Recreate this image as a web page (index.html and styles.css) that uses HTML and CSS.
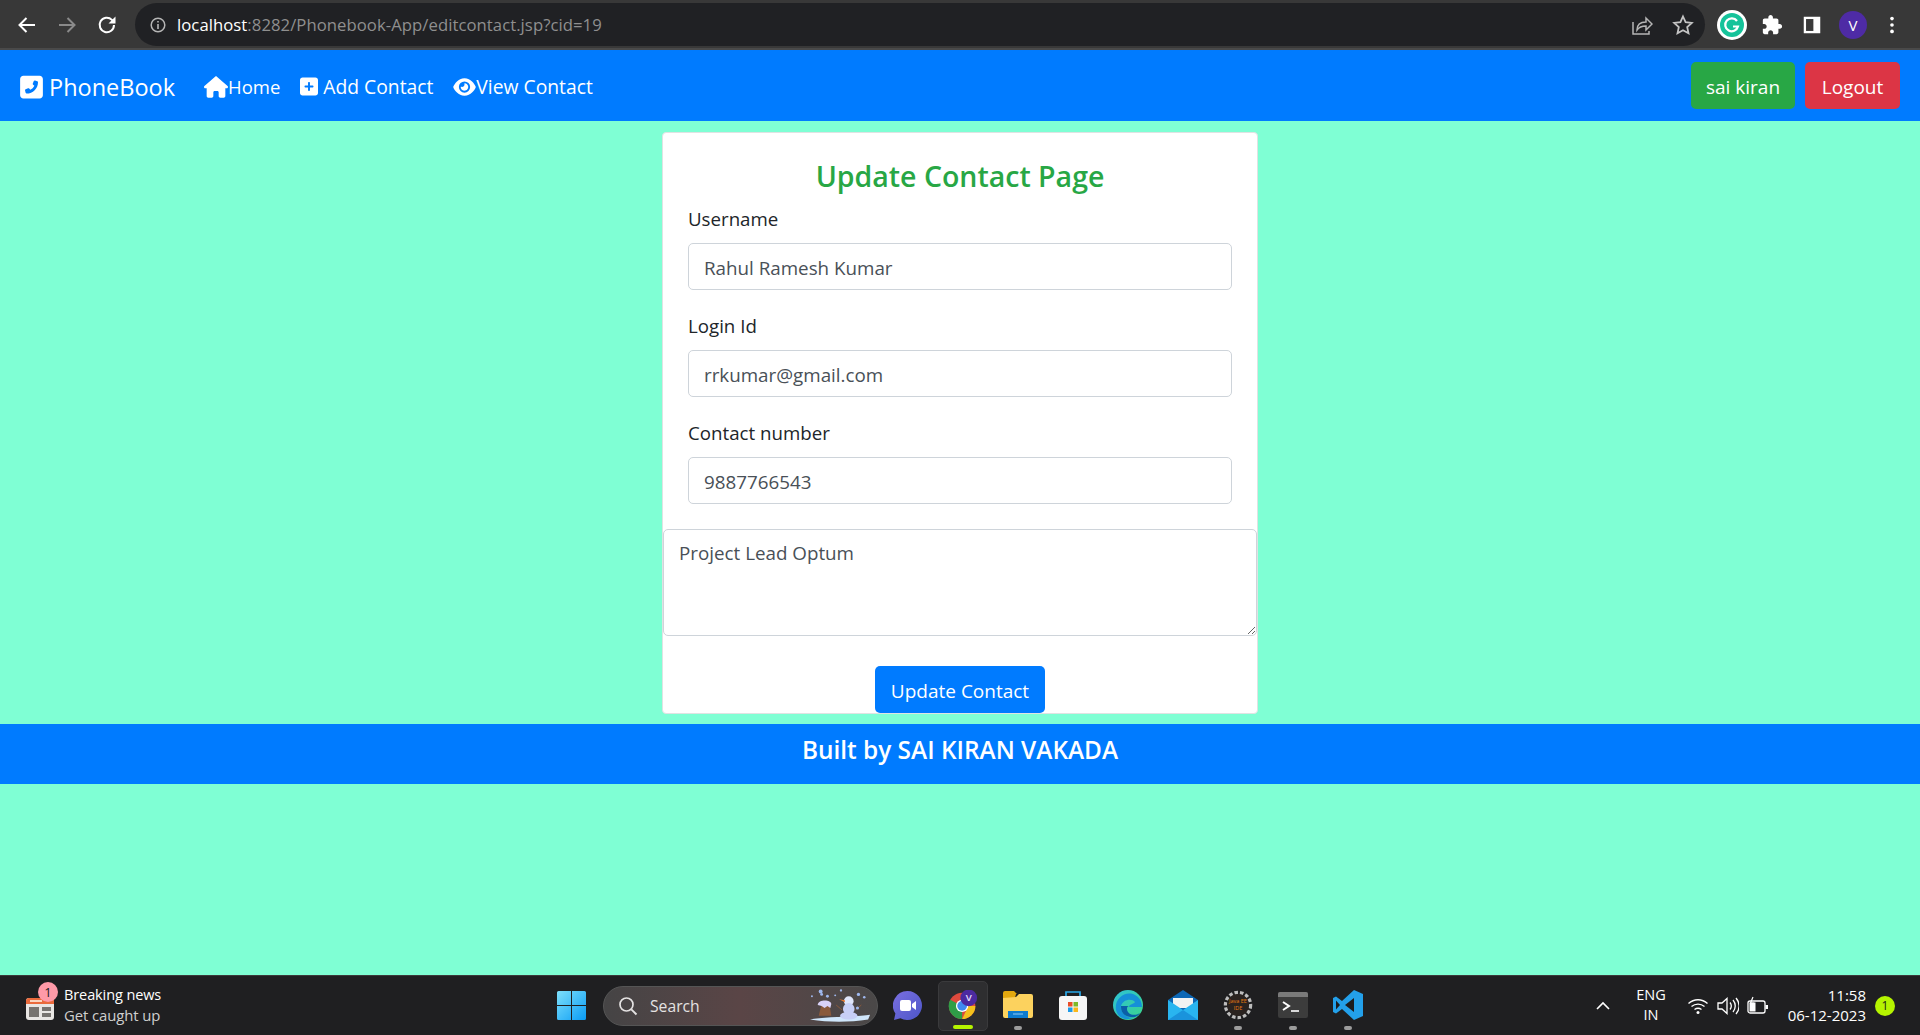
FILE: index.html
```html
<!DOCTYPE html>
<html lang="en">
<head>
<meta charset="utf-8">
<title>Update Contact</title>
<link rel="stylesheet" href="styles.css">
</head>
<body>
<div class="screen">
  <header class="toolbar">
    <div class="tb-nav">
      <svg class="tb-ico" viewBox="0 0 24 24"><path d="M20 12H5M11.5 5L4.5 12l7 7" fill="none" stroke="#fff" stroke-width="2"/></svg>
      <svg class="tb-ico" viewBox="0 0 24 24"><path d="M4 12h15M12.5 5l7 7-7 7" fill="none" stroke="#8a8a8a" stroke-width="2"/></svg>
      <svg class="tb-ico" viewBox="0 0 24 24"><path d="M19 12a7.2 7.2 0 1 1-2.1-5.1L19.5 9.500" fill="none" stroke="#fff" stroke-width="2"/><path d="M20.500 3.500v7h-7z" fill="#fff"/></svg>
    </div>
    <div class="omnibox">
      <svg class="omni-info" viewBox="0 0 18 18"><circle cx="9" cy="9" r="6.800" fill="none" stroke="#b5b5b5" stroke-width="1.500"/><path d="M9 8v5M9 5v1.600" stroke="#b5b5b5" stroke-width="1.600"/></svg>
      <span class="url"><span class="url-host">localhost</span>:8282/Phonebook-App/editcontact.jsp?cid=19</span>
      <svg class="omni-share" viewBox="0 0 22 22"><path d="M2 8v12h16v-3" fill="none" stroke="#b5b5b5" stroke-width="1.500"/><path d="M6 16c0-6 4-8 9-8V4l6 6-6 6v-4c-4 0-7 1-9 4z" fill="none" stroke="#b5b5b5" stroke-width="1.500"/></svg>
      <svg class="omni-star" viewBox="0 0 22 22"><path d="M11 2.500l2.600 5.700 6.200.7-4.600 4.200 1.300 6.100L11 16.200l-5.500 3 1.300-6.100-4.600-4.200 6.200-.7z" fill="none" stroke="#c4c4c4" stroke-width="1.800"/></svg>
    </div>
    <div class="tb-ext">
      <svg class="ext-g" viewBox="0 0 30 30"><circle cx="15" cy="15" r="15" fill="#fff"/><circle cx="15" cy="15" r="12" fill="#15c39a"/><path d="M20 11a6.500 6.500 0 1 0 1 5.500h-5" fill="none" stroke="#fff" stroke-width="2.200"/></svg>
      <svg class="ext-i" viewBox="0 0 24 24"><path fill="#fff" d="M20.500 11H19V7c0-1.100-.9-2-2-2h-4V3.500C13 2.120 11.880 1 10.500 1S8 2.120 8 3.500V5H4c-1.100 0-1.990.9-1.990 2v3.800H3.500c1.490 0 2.700 1.210 2.700 2.700s-1.210 2.700-2.700 2.700H2V20c0 1.100.9 2 2 2h3.800v-1.500c0-1.490 1.210-2.700 2.700-2.700 1.490 0 2.700 1.210 2.700 2.700V22H17c1.100 0 2-.9 2-2v-4h1.500c1.380 0 2.500-1.120 2.500-2.500S21.880 11 20.500 11z"/></svg>
      <svg class="ext-i ext-panel" viewBox="0 0 24 24"><path d="M3 3h18v18H3z" fill="#fff"/><path d="M5.500 5.500h8v13h-8z" fill="#3a3a3a"/></svg>
      <span class="avatar">V</span>
      <svg class="ext-i" viewBox="0 0 24 24"><circle cx="12" cy="5" r="2" fill="#fff"/><circle cx="12" cy="12" r="2" fill="#fff"/><circle cx="12" cy="19" r="2" fill="#fff"/></svg>
    </div>
  </header>

  <nav class="navbar">
    <a class="brand">
      <svg class="brand-ico" viewBox="0 0 448 512"><path fill="#fff" d="M384 32c35.300 0 64 28.700 64 64V416c0 35.300-28.700 64-64 64H64c-35.300 0-64-28.700-64-64V96C0 60.700 28.700 32 64 32H384zm-90.700 96.700c-9.700-2.600-19.900 2.300-23.700 11.600l-20 48c-3.400 8.200-1 17.600 5.800 23.200L280 231.700c-16.600 35.200-45.100 63.700-80.300 80.300l-20.200-24.700c-5.600-6.800-15-9.200-23.200-5.800l-48 20c-9.300 3.900-14.200 14-11.600 23.700l12 44C111.100 378 119 384 128 384c123.700 0 224-100.300 224-224c0-9-6-16.900-14.700-19.300l-44-12z"/></svg>
      <span>PhoneBook</span>
    </a>
    <a class="nav-link nav-home">
      <svg class="ico-home" viewBox="0 0 576 512"><path fill="#fff" d="M575.800 255.500c0 18-15 32.100-32 32.100h-32l.7 160.200c0 2.700-.2 5.400-.5 8.100V472c0 22.100-17.900 40-40 40H456c-1.100 0-2.200 0-3.300-.1c-1.400 .1-2.800 .1-4.200 .1H416 392c-22.100 0-40-17.900-40-40V448 384c0-17.700-14.300-32-32-32H256c-17.700 0-32 14.300-32 32v64 24c0 22.100-17.900 40-40 40H160 128.100c-1.500 0-3-.1-4.500-.2c-1.200 .1-2.400 .2-3.600 .2H104c-22.100 0-40-17.900-40-40V360c0-.9 0-1.900 .1-2.800V287.600H32c-18 0-32-14-32-32.100c0-9 3-17 10-24L266.400 8c7-7 15-8 22-8s15 2 21 7L564.800 231.500c8 7 12 15 11 24z"/></svg>
      <span>Home</span>
    </a>
    <a class="nav-link">
      <svg class="ico-plus" viewBox="0 0 448 512"><path fill="#fff" d="M64 32C28.700 32 0 60.700 0 96V416c0 35.300 28.700 64 64 64H384c35.300 0 64-28.700 64-64V96c0-35.300-28.700-64-64-64H64zM200 344V280H136c-13.300 0-24-10.700-24-24s10.700-24 24-24h64V168c0-13.300 10.700-24 24-24s24 10.700 24 24v64h64c13.300 0 24 10.700 24 24s-10.700 24-24 24H248v64c0 13.300-10.700 24-24 24s-24-10.700-24-24z"/></svg>
      <span>Add Contact</span>
    </a>
    <a class="nav-link">
      <svg class="ico-eye" viewBox="0 0 576 512"><path fill="#fff" d="M288 32c-80.800 0-145.500 36.800-192.600 80.600C48.600 156 17.300 208 2.500 243.700c-3.300 7.900-3.300 16.700 0 24.600C17.300 304 48.600 356 95.400 399.400C142.500 443.200 207.200 480 288 480s145.500-36.800 192.600-80.600c46.800-43.500 78.100-95.400 93-131.100c3.300-7.900 3.300-16.700 0-24.600c-14.900-35.700-46.200-87.700-93-131.100C433.500 68.800 368.800 32 288 32zM144 256a144 144 0 1 1 288 0 144 144 0 1 1 -288 0zm144-64c0 35.300-28.700 64-64 64c-7.100 0-13.900-1.200-20.300-3.300c-5.500-1.800-11.900 1.600-11.700 7.400c.3 6.900 1.300 13.800 3.200 20.700c13.700 51.200 66.400 81.600 117.600 67.900s81.600-66.400 67.900-117.600c-11.100-41.500-47.800-69.400-88.600-71.100c-5.800-.2-9.200 6.100-7.400 11.700c2.100 6.400 3.300 13.200 3.300 20.300z"/></svg>
      <span>View Contact</span>
    </a>
    <div class="nav-actions">
      <a class="btn btn-green">sai kiran</a>
      <a class="btn btn-red">Logout</a>
    </div>
  </nav>

  <main class="page">
    <div class="card">
      <h4 class="card-title">Update Contact Page</h4>
      <div class="field">
        <label class="field-label">Username</label>
        <input class="control" type="text" value="Rahul Ramesh Kumar">
      </div>
      <div class="field">
        <label class="field-label">Login Id</label>
        <input class="control" type="text" value="rrkumar@gmail.com">
      </div>
      <div class="field">
        <label class="field-label">Contact number</label>
        <input class="control" type="text" value="9887766543">
      </div>
      <textarea class="control area">Project Lead Optum</textarea>
      <div class="submit-row"><button class="btn btn-blue" type="button">Update Contact</button></div>
    </div>
  </main>

  <footer class="footer">Built by SAI KIRAN VAKADA</footer>
  <div class="spacer"></div>

  <div class="taskbar">
    <div class="tk-left">
      <div class="news-ico">
        <svg class="news-svg" viewBox="0 0 28 26"><rect x="0" y="2" width="28" height="22" rx="3" fill="#e9e6e3"/><path d="M0 5a3 3 0 0 1 3-3h22a3 3 0 0 1 3 3v3H0z" fill="#ea6a3c"/><rect x="3" y="11" width="10" height="10" fill="#77736f"/><rect x="16" y="11" width="9" height="4" fill="#77736f"/><rect x="16" y="17" width="9" height="4" fill="#77736f"/><rect x="4" y="4" width="12" height="2" fill="#fbd5c0"/></svg>
        <span class="news-badge">1</span>
      </div>
      <div class="news-text"><span class="news-1">Breaking news</span><span class="news-2">Get caught up</span></div>
    </div>

    <svg class="win" viewBox="0 0 29 29"><defs><linearGradient id="wg" x1="0" y1="0" x2="1" y2="1"><stop offset="0" stop-color="#7ee0fb"/><stop offset="1" stop-color="#0a9cf5"/></linearGradient></defs><path fill="url(#wg)" d="M0 1.500A1.500 1.500 0 0 1 1.500 0H14v14H0zM15 0h12.500A1.500 1.500 0 0 1 29 1.500V14H15zM0 15h14v14H1.500A1.500 1.500 0 0 1 0 27.500zM15 15h14v12.500a1.500 1.500 0 0 1-1.500 1.500H15z"/></svg>

    <div class="search">
      <svg class="search-ico" viewBox="0 0 20 20"><circle cx="8.500" cy="8.500" r="6.500" fill="none" stroke="#e4e2e2" stroke-width="1.700"/><path d="M13.300 13.300L18.500 18.500" stroke="#e4e2e2" stroke-width="1.900"/></svg>
      <span class="search-text">Search</span>
      <svg class="snow" viewBox="0 0 64 36"><path d="M0 32c14-3 50-3 62-5l-2 5c-20 3-40 3-60 0z" fill="#cfe6fb"/><path d="M9 28l3-12h8l2 12z" fill="#8a5a3c"/><path d="M8 17c0-6 14-6 14-1l-1 4-3-2-3 2-3-2z" fill="#d9d2f8"/><circle cx="40" cy="13" r="5" fill="#dfe6fb"/><circle cx="40" cy="21" r="6" fill="#c7cff6"/><ellipse cx="40" cy="28" rx="9" ry="4" fill="#c7cff6"/><path d="M36 12l-6-1 6 3z" fill="#e8772e"/><path d="M47 22l6-5M33 22l-6-5" stroke="#8a5a3c" stroke-width="1"/><circle cx="12" cy="6" r="1.500" fill="#9fb8ee"/><circle cx="2" cy="8" r="1" fill="#9fb8ee"/><circle cx="11" cy="3" r="2" fill="#9fb8ee"/><circle cx="18" cy="8" r="1.500" fill="#9fb8ee"/><circle cx="26" cy="7" r="1" fill="#9fb8ee"/><circle cx="32" cy="2" r="1.200" fill="#9fb8ee"/><circle cx="50" cy="6" r="1.700" fill="#9fb8ee"/><circle cx="56" cy="9" r="1.300" fill="#9fb8ee"/><circle cx="49" cy="20" r="1.600" fill="#9fb8ee"/></svg>
    </div>

    <svg class="app-teams" viewBox="0 0 29 29"><defs><linearGradient id="tg" x1="0" y1="0" x2="1" y2="1"><stop offset="0" stop-color="#7b6fe0"/><stop offset="1" stop-color="#4c56c8"/></linearGradient></defs><path fill="url(#tg)" d="M14.500 0a14.500 14.500 0 1 1-7 27.200L1 29l1.400-6.400A14.500 14.500 0 0 1 14.500 0z"/><rect x="7" y="9" width="11" height="11" rx="2" fill="#fff"/><path d="M19 13l4-3v9l-4-3z" fill="#fff"/></svg>

    <div class="tk-apps">
      <div class="app app-active">
        <svg class="app-svg" viewBox="0 0 34 34"><circle cx="16" cy="18" r="15" fill="#de4a3d"/><path d="M16 33A15 15 0 0 1 2.500 11L16 18z" fill="#2f9e47"/><path d="M31 18a15 15 0 0 1-15 15L23 18z" fill="#f5c11c"/><circle cx="16" cy="18" r="7" fill="#fff"/><circle cx="16" cy="18" r="5.500" fill="#3f8bf0"/><circle cx="23.500" cy="9" r="9.500" fill="#4c2aa0"/><text class="chrome-v" x="23.500" y="12.500">V</text></svg>
        <span class="run run-on"></span>
      </div>
      <div class="app">
        <svg class="app-svg" viewBox="0 0 30 30"><path d="M0 3a2 2 0 0 1 2-2h9l3 3h-1l-1 4H0z" fill="#e3a80f"/><path d="M0 8l13-1 3-3h12a2 2 0 0 1 2 2v20a2 2 0 0 1-2 2H2a2 2 0 0 1-2-2z" fill="#fcd25e"/><path d="M5 21h20v7H5z" fill="#0d7bd0"/><path d="M10 24h10" stroke="#8fcbf5" stroke-width="1"/></svg>
        <span class="run"></span>
      </div>
      <div class="app">
        <svg class="app-svg" viewBox="0 0 30 30"><path d="M8 6V2h14v4" fill="none" stroke="#29a8e8" stroke-width="1.700"/><rect x="1" y="6" width="28" height="24" rx="3" fill="#f6f6f6"/><rect x="10" y="12" width="4.500" height="4.500" fill="#ea4d28"/><rect x="15.500" y="12" width="4.500" height="4.500" fill="#7eb92a"/><rect x="10" y="17.500" width="4.500" height="4.500" fill="#1e9be8"/><rect x="15.500" y="17.500" width="4.500" height="4.500" fill="#fab81a"/></svg>
      </div>
      <div class="app">
        <svg class="app-svg" viewBox="0 0 30 30"><defs><linearGradient id="eg" x1="0" y1="0" x2="1" y2="1"><stop offset="0" stop-color="#2ec0d8"/><stop offset="1" stop-color="#3bd68a"/></linearGradient></defs><circle cx="15" cy="15" r="15" fill="url(#eg)"/><path d="M3 20C1 8 13 0 22 5c6 3 7 9 7 12l-13 0c0-3 5-3 6-5-3-4-12-3-14 4-1 6 5 12 12 12C12 31 5 28 3 20z" fill="#1690d8"/><path d="M8 17c0 8 7 11 14 10 2-1 4-2 5-4-6 4-13 1-13-4 0-3 2-3 2-3H8z" fill="#0a5ea8"/></svg>
      </div>
      <div class="app">
        <svg class="app-svg" viewBox="0 0 30 30"><path d="M0 10L15 0l15 10v20H0z" fill="#0d67b5"/><path d="M5 8h20v10H5z" fill="#f2f2f2"/><path d="M0 10l15 10L30 10v20H0z" fill="#29b5f0"/><path d="M0 30L15 20l15 10z" fill="#1a93dc"/></svg>
      </div>
      <div class="app">
        <svg class="app-svg" viewBox="0 0 30 30"><circle cx="15" cy="15" r="12.500" fill="none" stroke="#bdbdbd" stroke-width="3.500" stroke-dasharray="3.500 2"/><circle cx="15" cy="15" r="11" fill="#2a2320"/><text class="java-t" x="15" y="12.500">Java EE</text><text class="java-t" x="15" y="20">IDE</text></svg>
        <span class="run"></span>
      </div>
      <div class="app">
        <svg class="app-svg" viewBox="0 0 30 30"><rect y="2" width="30" height="26" rx="2" fill="#3c3c3c"/><path d="M0 4a2 2 0 0 1 2-2h26a2 2 0 0 1 2 2v3H0z" fill="#7a7a7a"/><path d="M5 12l6 4-6 4" fill="none" stroke="#fff" stroke-width="2"/><path d="M13 21h8" stroke="#fff" stroke-width="1.600"/></svg>
        <span class="run"></span>
      </div>
      <div class="app">
        <svg class="app-svg" viewBox="0 0 30 30"><path d="M21 0l9 4v22l-9 4-12-11-6 4.500L0 22V8l3-1.500L9 11z" fill="#23a0ea"/><path d="M21 8l-9 7 9 7z" fill="#1c1c1e"/><path d="M3 10.500L7 15l-4 4.500z" fill="#1c1c1e"/></svg>
        <span class="run"></span>
      </div>
    </div>

    <div class="tray">
      <svg class="tray-chev" viewBox="0 0 16 10"><path d="M2 8l6-6 6 6" fill="none" stroke="#fff" stroke-width="1.600"/></svg>
      <div class="lang"><span>ENG</span><span>IN</span></div>
      <svg class="tray-wifi" viewBox="0 0 22 18"><path d="M1.500 6.500c5.500-5 13.500-5 19 0M4.500 9.500c3.800-3.200 9.200-3.200 13 0M7.500 12.500c2-1.500 5-1.500 7 0" fill="none" stroke="#fff" stroke-width="1.400"/><circle cx="11" cy="15.500" r="1.500" fill="#fff"/></svg>
      <svg class="tray-vol" viewBox="0 0 22 20"><path d="M1 7h4l5-4.500v15L5 13H1z" fill="none" stroke="#fff" stroke-width="1.300"/><path d="M13 6.500c1.500 2 1.500 5 0 7M16 4c3 3.500 3 8.500 0 12M19 2c4 5 4 11 0 16" fill="none" stroke="#fff" stroke-width="1.300"/></svg>
      <svg class="tray-bat" viewBox="0 0 22 20"><rect x="1" y="5" width="17" height="12" rx="2" fill="none" stroke="#fff" stroke-width="1.300"/><rect x="2.500" y="6.500" width="6" height="9" fill="#fff"/><rect x="18.500" y="9" width="2.500" height="4" fill="#fff"/><path d="M6 1L3.500 7h3L5 12" fill="none" stroke="#fff" stroke-width="1.200"/></svg>
      <div class="clock"><span>11:58</span><span>06-12-2023</span></div>
      <span class="notif">1</span>
    </div>
  </div>
</div>
</body>
</html>
```

FILE: styles.css
```css
* { box-sizing: border-box; }
html, body { margin: 0; padding: 0; height: 100%; }
body { font-family: "Open Sans", "Liberation Sans", sans-serif; background: #7fffd4; color: #212529; overflow: hidden; }
a { color: inherit; text-decoration: none; }

.screen { height: 1035px; display: flex; flex-direction: column; }

/* Browser toolbar */
.toolbar { height: 50px; flex: none; background: #383838; border-bottom: 2px solid #4a4a4a; display: flex; align-items: center; padding-top: 1px; }
.tb-nav { width: 135px; display: flex; align-items: center; padding-left: 15px; gap: 16px; flex: none; }
.tb-ico { width: 24px; height: 24px; flex: none; }
.omnibox { width: 1570px; height: 43px; flex: none; background: #202124; border-radius: 22px; display: flex; align-items: center; padding: 0 11px 0 14px; color: #8f8f8f; }
.omni-info { width: 18px; height: 18px; flex: none; }
.url { margin-left: 10px; font-size: 16.700px; letter-spacing: 0.050px; white-space: nowrap; }
.url-host { color: #fff; }
.omni-share { width: 22px; height: 22px; margin-left: auto; }
.omni-star { width: 22px; height: 22px; margin-left: 19px; }
.tb-ext { flex: 1; display: flex; align-items: center; padding-left: 12px; }
.ext-g { width: 30px; height: 30px; flex: none; }
.ext-i { width: 22px; height: 22px; flex: none; margin-left: 14px; }
.ext-i.ext-panel { margin-left: 18px; }
.avatar { width: 28px; height: 28px; border-radius: 50%; background: #4e2ba5; color: #fff; font-size: 15px; display: flex; align-items: center; justify-content: center; margin-left: 16px; flex: none; }

/* Navbar */
.navbar { height: 71px; flex: none; background: #007bff; color: #fff; display: flex; align-items: center; padding: 2px 20px 0; }
.brand { display: flex; align-items: center; font-size: 23.500px; width: 184px; flex: none; }
.brand-ico { width: 23px; height: 26px; margin-right: 6px; flex: none; }
.nav-link { display: flex; align-items: center; font-size: 19.300px; margin-right: 20px; }
.nav-home { font-size: 18.500px; }
.ico-home { width: 24px; height: 22px; flex: none; }
.ico-plus { width: 18px; height: 21px; margin-right: 5px; flex: none; }
.ico-eye { width: 23px; height: 20px; flex: none; }
.nav-actions { margin: -2px 0 0 auto; display: flex; gap: 10px; }
.btn { height: 47px; border-radius: 5px; border: 0; color: #fff; font-family: inherit; font-size: 19px; display: inline-flex; align-items: center; justify-content: center; padding-top: 3px; }
.btn-green { width: 104px; background: #28a745; }
.btn-red { width: 95px; background: #dc3545; }
.btn-blue { width: 170px; background: #007bff; }

/* Card */
.page { flex: none; display: flex; justify-content: center; padding: 11px 0 10px; }
.card { width: 596px; height: 582px; background: #fff; border: 1px solid #dfe3e3; border-radius: 4px; }
.card-title { margin: 0; padding-top: 23px; height: 63px; color: #28a745; font-size: 28.500px; font-weight: 600; line-height: 40px; text-align: center; }
.field { padding: 0 25px; margin-bottom: 20px; display: flex; flex-direction: column; }
.field-label { height: 40px; padding-top: 3px; font-size: 18.700px; line-height: 25px; }
.field:first-of-type .field-label { height: 47px; padding-top: 10px; }
.control { display: block; width: 100%; height: 47px; border: 1px solid #ced4da; border-radius: 5px; padding: 3px 15px 0; background: #fff; color: #495057; font-family: inherit; font-size: 18.800px; outline: 0; }
.area { height: 107px; padding: 10px 15px; margin-top: 25px; line-height: 27px; }
.submit-row { display: flex; justify-content: center; margin-top: 30px; }

/* Footer */
.footer { height: 60px; flex: none; background: #007bff; color: #fff; font-size: 24.400px; font-weight: 600; text-align: center; padding-top: 9px; line-height: 33px; }
.spacer { flex: 1; }

/* Taskbar */
.taskbar { height: 60px; flex: none; background: #1f1f21; border-top: 1px solid #3a3a3a; display: flex; align-items: center; color: #fff; }
.tk-left { width: 557px; flex: none; display: flex; align-items: center; padding-left: 26px; }
.news-ico { width: 28px; height: 26px; position: relative; flex: none; }
.news-svg { width: 28px; height: 26px; display: block; margin-top: 3px; }
.news-badge { position: absolute; right: -4px; top: -11px; width: 20px; height: 20px; border-radius: 50%; background: #ff9aa8; color: #1a1a1a; font-size: 13px; display: flex; align-items: center; justify-content: center; }
.news-text { display: flex; flex-direction: column; margin: -1px 0 0 10px; font-size: 14.500px; line-height: 20px; letter-spacing: -0.100px; }
.news-1 { color: #fff; }
.news-2 { color: #cfcfcf; font-size: 14.900px; }
.win { width: 29px; height: 29px; flex: none; }
.search { width: 275px; height: 40px; flex: none; margin-left: 17px; border-radius: 20px; background: linear-gradient(90deg, #454445, #5a4546 50%, #4a4848); border: 1px solid #555; display: flex; align-items: center; padding-left: 14px; }
.search-ico { width: 20px; height: 20px; flex: none; }
.search-text { margin-left: 12px; font-size: 15.700px; color: #e4e2e2; }
.snow { width: 62px; height: 36px; margin-left: auto; margin-right: 5px; }
.app-teams { width: 29px; height: 29px; flex: none; margin-left: 15px; }
.tk-apps { display: flex; margin-left: 16px; gap: 5px; flex: none; }
.app { width: 50px; height: 50px; position: relative; display: flex; align-items: center; justify-content: center; border-radius: 5px; }
.app-active { background: #2e2e30; border: 1px solid #3a3a3c; }
.app-svg { width: 30px; height: 30px; margin-bottom: 2px; }
.run { position: absolute; bottom: 1px; left: 50%; margin-left: -4px; width: 8px; height: 4px; border-radius: 2px; background: #9c9c9c; }
.run-on { width: 20px; margin-left: -10px; background: #b5f400; }
.chrome-v { fill: #e8e0ff; font-size: 11px; font-weight: 600; text-anchor: middle; }
.java-t { fill: #e87a10; font-size: 5.500px; text-anchor: middle; }

.tray { margin-left: auto; display: flex; align-items: center; flex: none; padding-right: 25px; }
.tray-chev { width: 16px; height: 10px; }
.lang { width: 60px; margin-left: 10px; display: flex; flex-direction: column; align-items: center; font-size: 14.500px; line-height: 20px; margin-top: -2px; }
.tray-wifi { width: 22px; height: 18px; margin-left: 6px; }
.tray-vol { width: 22px; height: 20px; margin-left: 8px; }
.tray-bat { width: 22px; height: 20px; margin-left: 8px; }
.clock { width: 97px; display: flex; flex-direction: column; align-items: flex-end; font-size: 15px; line-height: 20px; margin-top: -2px; }
.notif { width: 20px; height: 20px; border-radius: 50%; background: #b5f400; color: #1c1c1c; font-size: 12px; display: flex; align-items: center; justify-content: center; margin-left: 9px; }
```
